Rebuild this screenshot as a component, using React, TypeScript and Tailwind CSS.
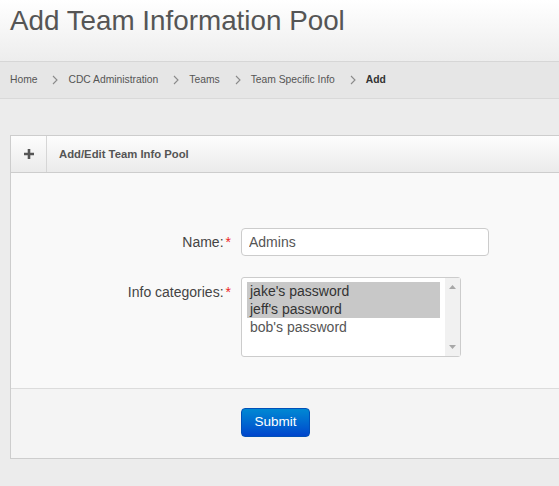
import React from 'react';

const crumbs = ['Home', 'CDC Administration', 'Teams', 'Team Specific Info'];
const options = [
  { label: "jake's password", selected: true },
  { label: "jeff's password", selected: true },
  { label: "bob's password", selected: false },
];

const Chevron: React.FC = () => (
  <svg width="6" height="10" viewBox="0 0 6 10" className="ml-[15px] mr-[10px]">
    <path d="M1 1 L5 5 L1 9" fill="none" stroke="#8a8a8a" strokeWidth="1.1" />
  </svg>
);

const Required: React.FC = () => <span className="ml-[2px] text-[#e22]">*</span>;

export default function App() {
  return (
    <div className="min-h-[486px] overflow-hidden bg-[#ececec] font-['Liberation_Sans',Arial,sans-serif] text-[#555]">
      {/* Page title */}
      <div className="h-[61px] bg-gradient-to-b from-white to-[#ededed] pl-[10px] pt-[7px]">
        <h1 className="text-[27.8px] leading-none font-normal text-[#555]">Add Team Information Pool</h1>
      </div>

      {/* Breadcrumb */}
      <div className="flex h-[38px] items-center border-y border-t-[#d6d6d6] border-b-[#d9d9d9] bg-[#e6e6e6] pl-[10px] text-[10.3px]">
        {crumbs.map((c) => (
          <React.Fragment key={c}>
            <span>{c}</span>
            <Chevron />
          </React.Fragment>
        ))}
        <span className="font-bold text-[#333]">Add</span>
      </div>

      {/* Panel */}
      <div className="ml-[10px] mt-[36px] w-[600px] border border-[#cdcdcd]">
        <div className="flex h-[37px] items-stretch border-b border-[#cdcdcd] bg-gradient-to-b from-[#fdfdfd] to-[#ebebeb]">
          <div className="flex w-[36px] items-center justify-center border-r border-[#d6d6d6]">
            <svg width="10" height="10" viewBox="0 0 10 10">
              <path d="M5 0 V10 M0 5 H10" stroke="#555" strokeWidth="2.6" />
            </svg>
          </div>
          <div className="flex items-center pl-[12px] text-[11.3px] font-bold text-[#555]">Add/Edit Team Info Pool</div>
        </div>

        <div className="bg-[#f9f9f9] pt-[55px] pb-[31px]">
          <div className="flex items-center">
            <label className="w-[220px] text-right text-[14px] leading-[20px] text-[#444]">
              Name:<Required />
            </label>
            <input
              defaultValue="Admins"
              className="ml-[10px] h-[28px] w-[248px] rounded-[4px] border border-[#ccc] bg-white px-[7px] text-[14px] text-[#555] outline-none"
            />
          </div>

          <div className="mt-[21px] flex items-start">
            <label className="w-[220px] pt-[5px] text-right text-[14px] leading-[20px] text-[#444]">
              Info categories:<Required />
            </label>
            <div className="ml-[10px] flex h-[80px] w-[220px] rounded-[3px] border border-[#ccc] bg-white">
              <div className="flex-1 pl-[5px] pt-[4px] pr-[5px]">
                {options.map((o) => (
                  <div
                    key={o.label}
                    className={`h-[18px] pl-[3px] text-[14px] leading-[18px] ${o.selected ? 'bg-[#c8c8c8] text-[#333]' : 'text-[#555]'}`}
                  >
                    {o.label}
                  </div>
                ))}
              </div>
              <div className="flex w-[15px] flex-col items-center justify-between bg-[#f1f1f1] py-[7px]">
                <svg width="7" height="4" viewBox="0 0 7 4">
                  <path d="M0 4 L3.5 0 L7 4 Z" fill="#a8a8a8" />
                </svg>
                <svg width="7" height="4" viewBox="0 0 7 4">
                  <path d="M0 0 L3.5 4 L7 0 Z" fill="#a8a8a8" />
                </svg>
              </div>
            </div>
          </div>
        </div>

        <div className="border-t border-[#dcdcdc] bg-[#f4f4f4] pl-[230px] pt-[19px] pb-[21px]">
          <button className="h-[29px] w-[69px] rounded-[4px] border border-[#0050b8] bg-gradient-to-b from-[#0088d3] to-[#0044cc] text-[13.5px] text-white">
            Submit
          </button>
        </div>
      </div>
    </div>
  );
}
